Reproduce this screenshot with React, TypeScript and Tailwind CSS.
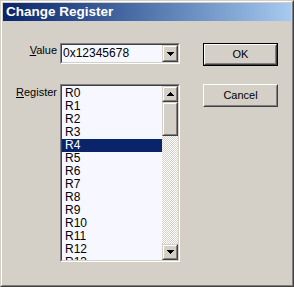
import React from "react";

const Up = () => (
  <svg width="7" height="4" viewBox="0 0 7 4" shapeRendering="crispEdges">
    <rect x="3" y="0" width="1" height="1" fill="#000" />
    <rect x="2" y="1" width="3" height="1" fill="#000" />
    <rect x="1" y="2" width="5" height="1" fill="#000" />
    <rect x="0" y="3" width="7" height="1" fill="#000" />
  </svg>
);

const Down = () => (
  <svg width="7" height="4" viewBox="0 0 7 4" shapeRendering="crispEdges">
    <rect x="0" y="0" width="7" height="1" fill="#000" />
    <rect x="1" y="1" width="5" height="1" fill="#000" />
    <rect x="2" y="2" width="3" height="1" fill="#000" />
    <rect x="3" y="3" width="1" height="1" fill="#000" />
  </svg>
);

const ScrollBtn = ({ children, className = "" }: { children?: React.ReactNode; className?: string }) => (
  <div className={`border border-t-[#d4d0c8] border-l-[#d4d0c8] border-r-[#404040] border-b-[#404040] bg-[#d4d0c8] ${className}`}>
    <div className="w-full h-full border border-t-white border-l-white border-r-[#808080] border-b-[#808080] flex items-center justify-center">
      {children}
    </div>
  </div>
);

const Button = ({ label, isDefault }: { label: string; isDefault?: boolean }) => {
  const inner = (
    <div className="w-full h-full border border-t-white border-l-white border-r-[#404040] border-b-[#404040]">
      <div className="w-full h-full border border-t-[#d4d0c8] border-l-[#d4d0c8] border-r-[#808080] border-b-[#808080] flex items-center justify-center text-[11px] text-black">
        {label}
      </div>
    </div>
  );
  return isDefault ? (
    <div className="w-[75px] h-[23px] border border-black bg-[#d4d0c8]">
      <div className="w-full h-full border border-t-white border-l-white border-r-[#404040] border-b-[#404040] -m-0">
        <div className="w-full h-full border border-t-[#d4d0c8] border-l-[#d4d0c8] border-r-[#808080] border-b-[#808080] flex items-center justify-center text-[11px] text-black">
          {label}
        </div>
      </div>
    </div>
  ) : (
    <div className="w-[75px] h-[23px] bg-[#d4d0c8]">{inner}</div>
  );
};

const Sunken = ({ children, className = "" }: { children?: React.ReactNode; className?: string }) => (
  <div className={`border border-t-[#808080] border-l-[#808080] border-r-white border-b-white ${className}`}>
    <div className="w-full h-full border border-t-[#404040] border-l-[#404040] border-r-[#d4d0c8] border-b-[#d4d0c8] bg-[#f7f8ff] flex">
      {children}
    </div>
  </div>
);

export default function App() {
  const items = Array.from({ length: 14 }, (_, i) => `R${i}`);
  return (
    <div className="w-[294px] h-[287px] border border-t-[#d4d0c8] border-l-[#d4d0c8] border-r-[#404040] border-b-[#404040] font-['Liberation_Sans',Arial,sans-serif] select-none">
      <div className="w-full h-full border border-t-white border-l-white border-r-[#808080] border-b-[#808080] bg-[#d4d0c8] p-[1px] flex flex-col">
        <div className="h-[18px] bg-linear-to-r from-[#0a246a] to-[#a6caf0] flex items-center pl-[3px]">
          <span className="text-white font-bold text-[13.5px] leading-none">Change Register</span>
        </div>
        <div className="flex flex-col pt-[22px]">
          <div className="flex items-start">
            <div className="w-[54px] text-right text-[11px] leading-[13px] pt-[1px] text-black">
              <span className="underline underline-offset-1">V</span>alue
            </div>
            <Sunken className="ml-[3px] w-[120px] h-[21px]">
              <div className="flex-1 pl-[1px] text-[12px] leading-[17px] text-black">0x12345678</div>
              <ScrollBtn className="w-[16px] h-[17px]">
                <Down />
              </ScrollBtn>
            </Sunken>
            <div className="ml-[23px]">
              <Button label="OK" isDefault />
            </div>
          </div>
          <div className="flex items-start mt-[18px]">
            <div className="w-[54px] text-right text-[11px] leading-[13px] pt-[2px] text-black">
              <span className="underline underline-offset-1">R</span>egister
            </div>
            <Sunken className="ml-[3px] w-[120px] h-[178px]">
              <div className="flex-1 overflow-hidden pt-[1px]">
                {items.map((it, i) => (
                  <div
                    key={it}
                    className={`h-[13px] leading-[13px] pl-[3px] text-[12px] ${i === 4 ? "bg-[#0a246a] text-white" : "text-black"}`}
                  >
                    {it}
                  </div>
                ))}
              </div>
              <div className="w-[16px] flex flex-col">
                <ScrollBtn className="w-[16px] h-[16px]">
                  <Up />
                </ScrollBtn>
                <ScrollBtn className="w-[16px] h-[34px]" />
                <div className="flex-1 bg-[repeating-conic-gradient(#d4d0c8_0%_25%,#ffffff_0%_50%)] bg-[length:2px_2px]" />
                <ScrollBtn className="w-[16px] h-[16px]">
                  <Down />
                </ScrollBtn>
              </div>
            </Sunken>
            <div className="ml-[23px]">
              <Button label="Cancel" />
            </div>
          </div>
        </div>
      </div>
    </div>
  );
}
